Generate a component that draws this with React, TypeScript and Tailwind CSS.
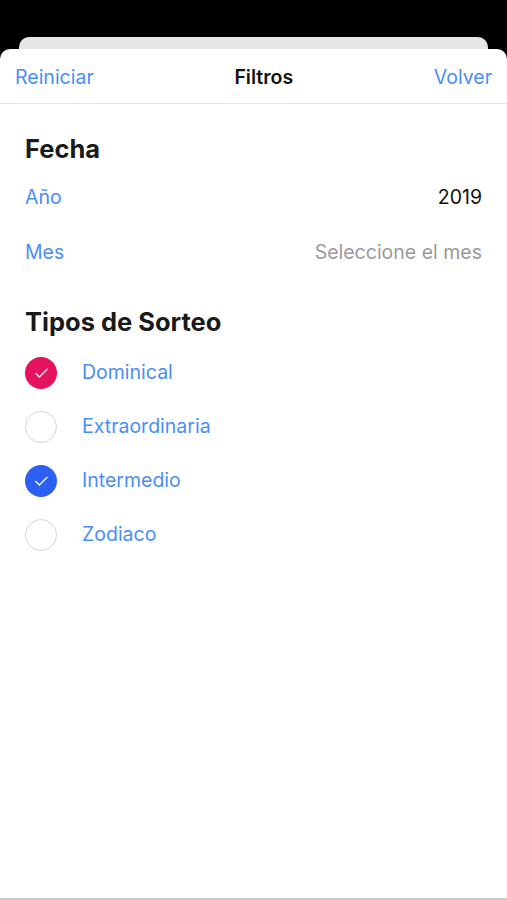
import { Check } from 'lucide-react';

type Option = { label: string; checked: boolean; color?: string };

const options: Option[] = [
  { label: 'Dominical', checked: true, color: 'bg-[#e6125d]' },
  { label: 'Extraordinaria', checked: false },
  { label: 'Intermedio', checked: true, color: 'bg-[#2c60f4]' },
  { label: 'Zodiaco', checked: false },
];

function CheckRow({ option }: { option: Option }) {
  return (
    <div className="flex h-[54px] items-center">
      {option.checked ? (
        <div className={`flex h-[32px] w-[32px] items-center justify-center rounded-full ${option.color}`}>
          <Check className="h-[17px] w-[17px] text-white" strokeWidth={1.75} />
        </div>
      ) : (
        <div className="h-[32px] w-[32px] rounded-full border-[1.5px] border-[#d6d6d6]" />
      )}
      <span className="ml-[25px] text-[19.5px] text-[#4a8ef4]">{option.label}</span>
    </div>
  );
}

export default function App() {
  return (
    <div className="flex h-[900px] flex-col bg-black font-['Inter',sans-serif]">
      <div className="h-[37px] shrink-0" />
      <div className="mx-[19px] h-[20px] shrink-0 rounded-t-[10px] bg-[#e7e7e7]" />
      <div className="relative -mt-[8px] flex flex-1 flex-col rounded-t-[10px] bg-white border-b-2 border-[#c9c9c9]">
        <div className="flex h-[55px] items-center justify-between border-b border-[#e4e4e4] px-[15px] pt-[3px]">
          <button className="text-[19.5px] text-[#4a8ef4]">Reiniciar</button>
          <span className="text-[19.5px] font-semibold text-[#111]">Filtros</span>
          <button className="text-[19.5px] text-[#4a8ef4]">Volver</button>
        </div>

        <div className="px-[25px]">
          <h2 className="mt-[29px] text-[25.5px] font-bold leading-[32px] text-[#1a1a1a]">Fecha</h2>
          <div className="mt-[15px] flex h-[36px] items-center justify-between">
            <span className="text-[19.5px] text-[#4a8ef4]">Año</span>
            <span className="text-[19.5px] text-[#111]">2019</span>
          </div>
          <div className="mt-[18px] flex h-[36px] items-center justify-between pt-[1px]">
            <span className="text-[19.5px] text-[#4a8ef4]">Mes</span>
            <span className="text-[19.5px] text-[#9a9a9a]">Seleccione el mes</span>
          </div>

          <h2 className="mt-[36px] text-[25.5px] font-bold leading-[32px] text-[#1a1a1a]">Tipos de Sorteo</h2>
          <div className="mt-[8px]">
            {options.map((o) => (
              <CheckRow key={o.label} option={o} />
            ))}
          </div>
        </div>
      </div>
    </div>
  );
}
